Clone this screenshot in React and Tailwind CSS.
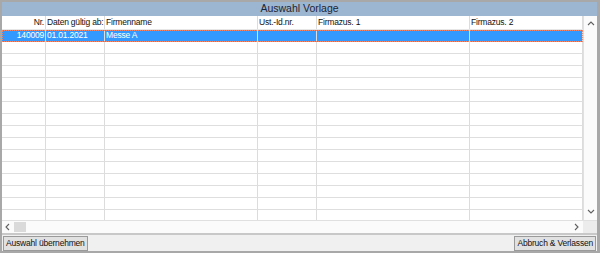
import React from 'react';

const cols = [
  { key: 'nr', label: 'Nr.', w: 'w-[44px]', right: true },
  { key: 'datum', label: 'Daten gültig ab:', w: 'w-[59px]' },
  { key: 'name', label: 'Firmenname', w: 'w-[153px]' },
  { key: 'ust', label: 'Ust.-Id.nr.', w: 'w-[59px]' },
  { key: 'zus1', label: 'Firmazus. 1', w: 'w-[153px]' },
  { key: 'zus2', label: 'Firmazus. 2', w: 'flex-1' },
];

const rows = [
  { nr: '140009', datum: '01.01.2021', name: 'Messe A', ust: '', zus1: '', zus2: '' },
];

const Chevron = ({ dir }) => {
  const paths = {
    up: 'M1 5 L4 2 L7 5',
    down: 'M1 2 L4 5 L7 2',
    left: 'M5 1 L2 4 L5 7',
    right: 'M2 1 L5 4 L2 7',
  };
  return (
    <svg width="8" height="8" viewBox="0 0 8 8">
      <path d={paths[dir]} fill="none" stroke="#606060" strokeWidth="1.1" />
    </svg>
  );
};

const Cell = ({ col, children, selected }) => (
  <div
    className={`${col.w} h-full shrink-0 border-r border-[#dcdcdc] px-[1px] leading-[11px] whitespace-nowrap overflow-hidden ${
      col.right ? 'text-right' : ''
    } ${selected ? 'text-white' : 'text-[#111]'}`}
  >
    {children}
  </div>
);

export default function App() {
  const emptyRows = Array.from({ length: 15 });

  return (
    <div
      className="w-[600px] h-[253px] bg-[#a8a8a8] flex flex-col pl-[2px] pr-[3px] pt-[2px] pb-[2px] text-[8.5px] tracking-[-0.2px]"
      style={{ fontFamily: '"Liberation Sans", Arial, sans-serif' }}
    >
      {/* title */}
      <div className="h-[14px] bg-[#9cb5d1] flex items-center justify-center text-[10.5px] tracking-normal text-[#1c2533]">
        Auswahl Vorlage
      </div>

      {/* grid + vertical scrollbar */}
      <div className="flex h-[204px] bg-white">
        <div className="flex-1 flex flex-col overflow-hidden">
          <div className="h-[14px] shrink-0 flex items-center border-b border-[#e6e6e6]">
            {cols.map((c) => (
              <div
                key={c.key}
                className={`${c.w} h-full shrink-0 border-r border-[#dcdcdc] px-[1px] flex items-center whitespace-nowrap overflow-hidden text-[#111] ${
                  c.right ? 'justify-end' : ''
                }`}
              >
                {c.label}
              </div>
            ))}
          </div>
          {rows.map((r, i) => (
            <div
              key={i}
              className="h-[12px] shrink-0 flex bg-[#3399ff] outline-1 outline-dotted outline-[#f2866a] -outline-offset-1"
            >
              {cols.map((c) => (
                <Cell key={c.key} col={c} selected>
                  {r[c.key]}
                </Cell>
              ))}
            </div>
          ))}
          {emptyRows.map((_, i) => (
            <div key={i} className="h-[12px] shrink-0 flex border-b border-[#dedede]">
              {cols.map((c) => (
                <Cell key={c.key} col={c} />
              ))}
            </div>
          ))}
        </div>
        <div className="w-[14px] border-l border-[#e0e0e0] bg-[#fbfbfb] flex flex-col items-center justify-between py-[4px]">
          <Chevron dir="up" />
          <Chevron dir="down" />
        </div>
      </div>

      {/* horizontal scrollbar */}
      <div className="h-[13px] flex border-t border-[#e0e0e0] bg-[#fbfbfb]">
        <div className="w-[12px] flex items-center justify-center">
          <Chevron dir="left" />
        </div>
        <div className="w-[12px] bg-[#dadada] my-[1px]" />
        <div className="flex-1" />
        <div className="w-[12px] flex items-center justify-center">
          <Chevron dir="right" />
        </div>
        <div className="w-[14px] bg-[#ececec]" />
      </div>

      {/* buttons */}
      <div className="h-[18px] bg-[#f0f0f0] border-t-2 border-[#c8c8c8] flex items-center justify-between px-[1px]">
        <button className="h-[15px] px-[2px] bg-[#e1e1e1] border border-[#9a9a9a] text-[8.5px] text-[#111] leading-none">
          Auswahl übernehmen
        </button>
        <button className="h-[15px] px-[2px] bg-[#e1e1e1] border border-[#9a9a9a] text-[8.5px] text-[#111] leading-none">
          Abbruch &amp; Verlassen
        </button>
      </div>
    </div>
  );
}
